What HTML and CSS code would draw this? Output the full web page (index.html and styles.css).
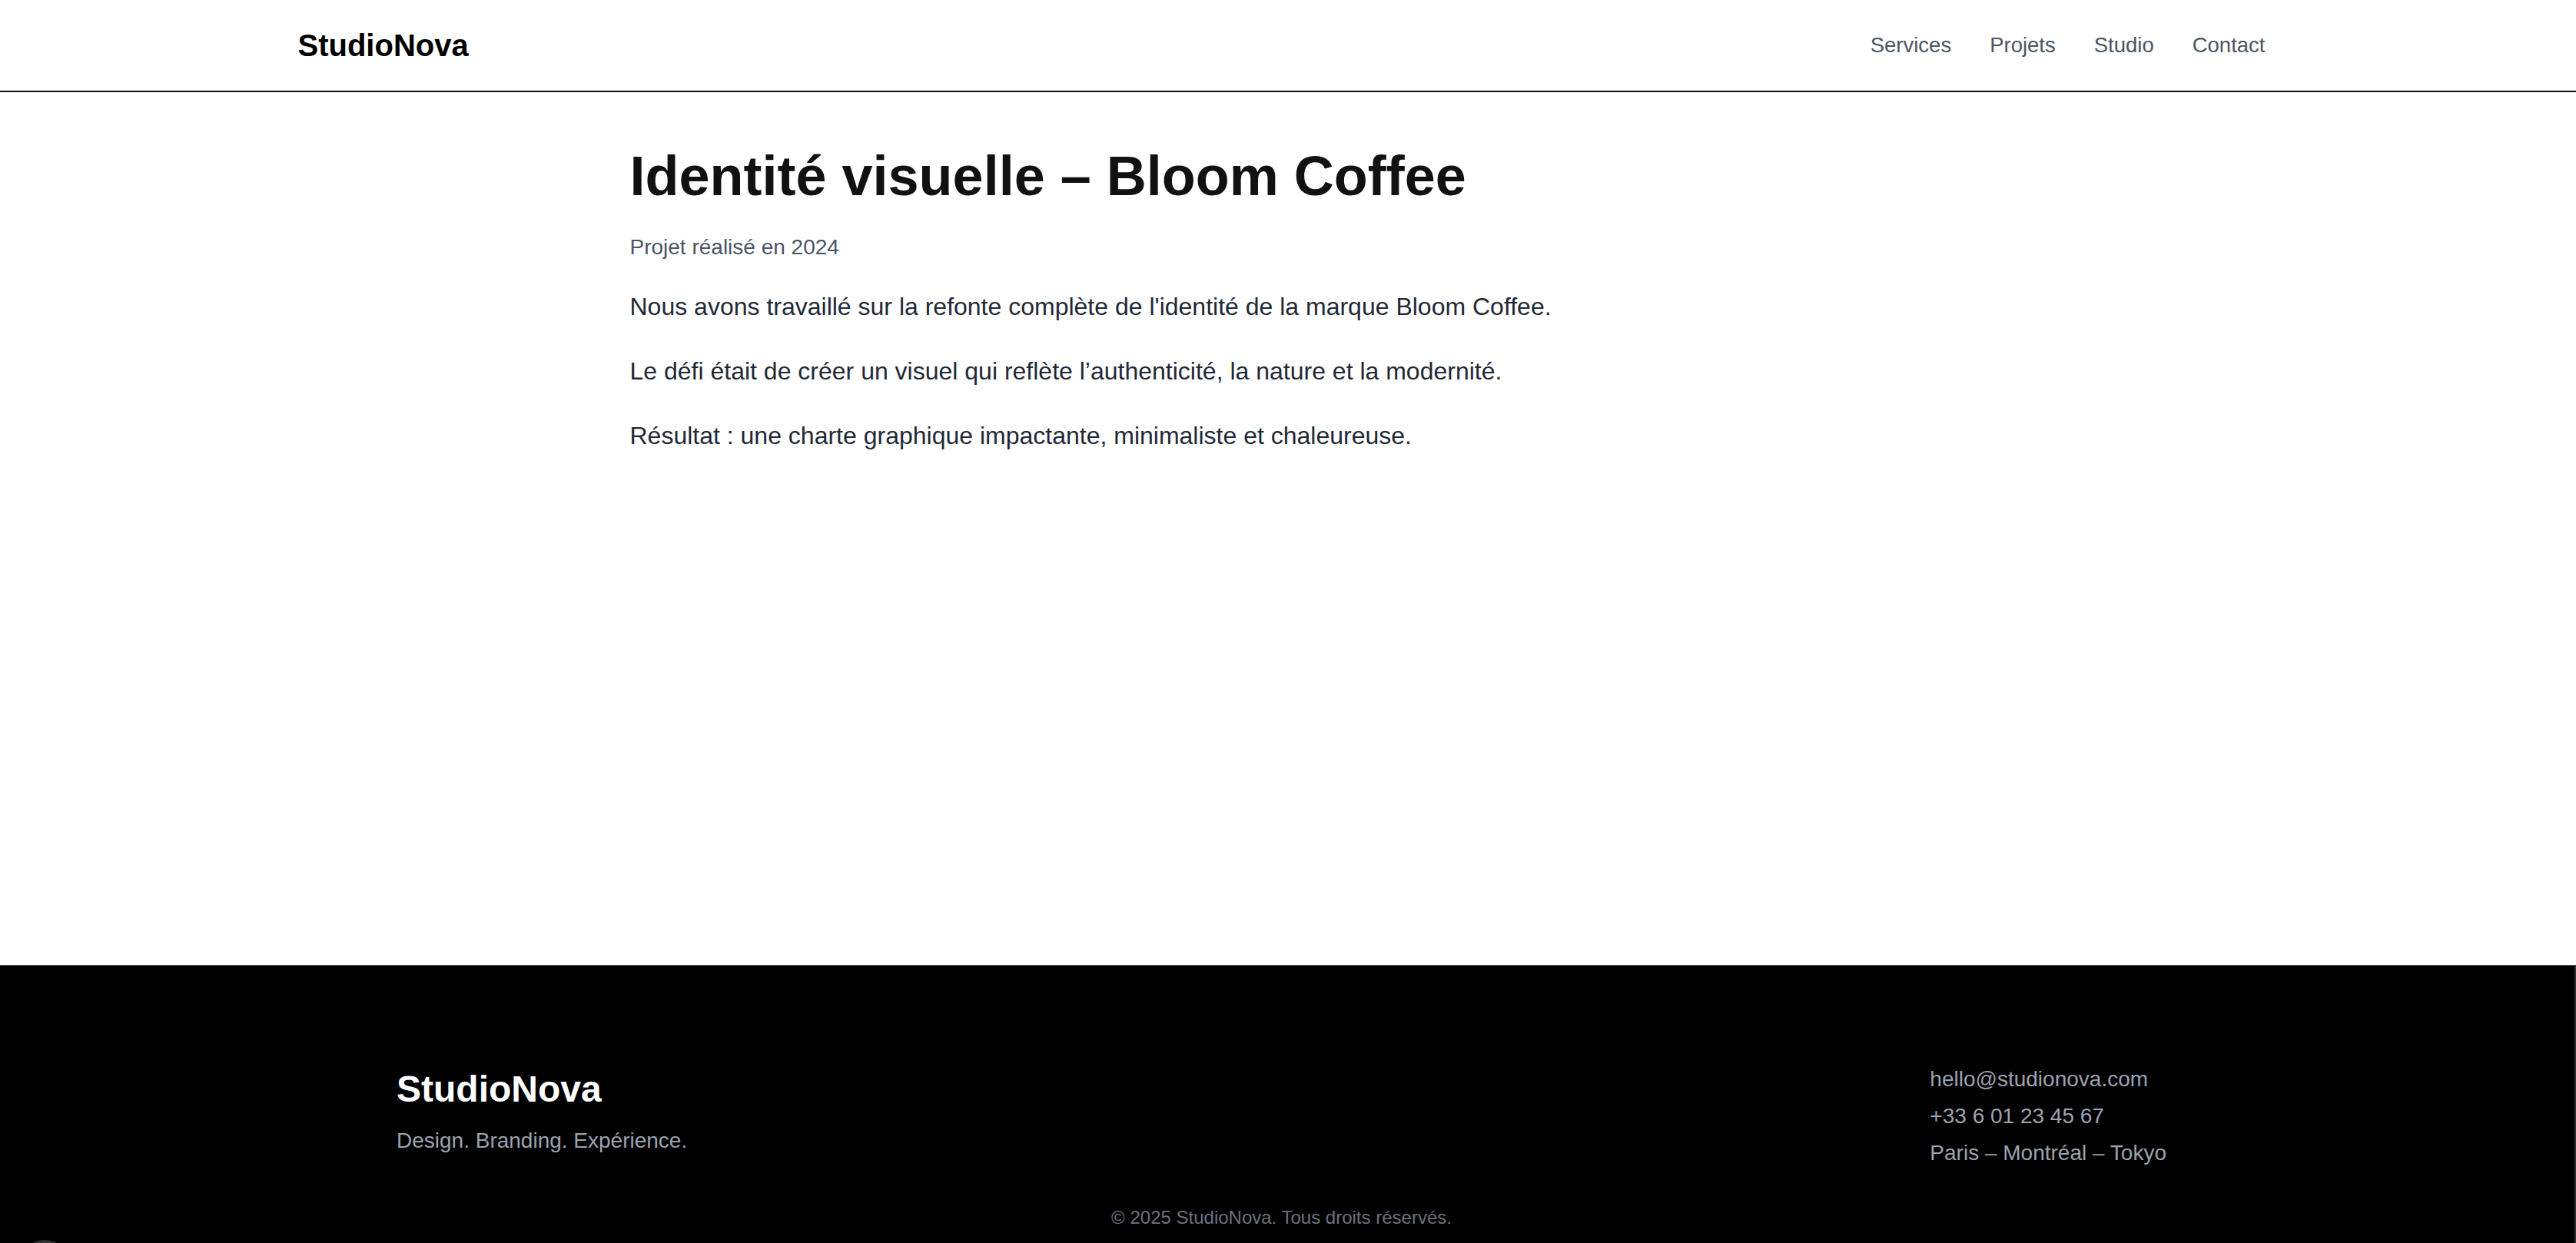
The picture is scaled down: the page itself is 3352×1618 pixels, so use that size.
FILE: index.html
```html
<!DOCTYPE html>
<html lang="fr">
<head>
<meta charset="utf-8">
<title>Identité visuelle – Bloom Coffee | StudioNova</title>
<link rel="stylesheet" href="styles.css">
</head>
<body>
<header class="site-header">
  <div class="header-inner">
    <a class="logo" href="#">StudioNova</a>
    <nav class="nav">
      <a href="#">Services</a>
      <a href="#">Projets</a>
      <a href="#">Studio</a>
      <a href="#">Contact</a>
    </nav>
  </div>
</header>

<main class="main">
  <article class="project">
    <h1 class="project-title">Identité visuelle – Bloom Coffee</h1>
    <p class="project-meta">Projet réalisé en 2024</p>
    <p class="project-text">Nous avons travaillé sur la refonte complète de l'identité de la marque Bloom Coffee.</p>
    <p class="project-text">Le défi était de créer un visuel qui reflète l’authenticité, la nature et la modernité.</p>
    <p class="project-text">Résultat : une charte graphique impactante, minimaliste et chaleureuse.</p>
  </article>
</main>

<footer class="site-footer">
  <div class="footer-inner">
    <div class="footer-brand">
      <div class="footer-logo">StudioNova</div>
      <p class="footer-tagline">Design. Branding. Expérience.</p>
    </div>
    <div class="footer-contact">
      <p>hello@studionova.com</p>
      <p>+33 6 01 23 45 67</p>
      <p>Paris – Montréal – Tokyo</p>
    </div>
  </div>
  <p class="copyright">© 2025 StudioNova. Tous droits réservés.</p>
  <div class="float-btn"></div>
</footer>
</body>
</html>
```

FILE: styles.css
```css
* { box-sizing: border-box; }

html, body {
  margin: 0;
  padding: 0;
}

body {
  font-family: "Liberation Sans", Arial, sans-serif;
  background: #ffffff;
  color: #111111;
}

a { text-decoration: none; color: inherit; }
p { margin: 0; }

/* Header */
.site-header {
  height: 120px;
  border-bottom: 2px solid #111111;
  padding-right: 15px;
}

.header-inner {
  max-width: 2562px;
  height: 100%;
  margin: 0 auto;
  display: flex;
  align-items: center;
  justify-content: space-between;
}

.logo {
  font-size: 40px;
  font-weight: 700;
  color: #000000;
  line-height: 1;
}

.nav {
  display: flex;
  gap: 50px;
  padding-right: 2px;
}

.nav a {
  font-size: 27.5px;
  color: #4b5563;
  line-height: 1;
}

/* Main */
.main {
  min-height: 1136px;
  padding: 66px 15px 0 0;
}

.project {
  max-width: 1698px;
  margin: 0 auto;
}

.project-title {
  margin: 0;
  font-size: 72px;
  line-height: 1.2;
  font-weight: 700;
  color: #111111;
}

.project-meta {
  margin-top: 29px;
  font-size: 28px;
  line-height: 42px;
  color: #4b5563;
}

.project-text {
  font-size: 32px;
  line-height: 48px;
  color: #1f2937;
  margin-top: 36px;
}

.project-meta + .project-text {
  margin-top: 32px;
}

/* Footer */
.site-footer {
  position: relative;
  background: #000000;
  border-top: 1px solid #555555;
  border-right: 2px solid #333333;
  padding: 124px 15px 60px 0;
  overflow: hidden;
}

.footer-inner {
  max-width: 2303px;
  margin: 0 auto;
  display: flex;
  justify-content: space-between;
  align-items: flex-start;
}

.footer-brand {
  padding-top: 8px;
}

.footer-logo {
  font-size: 48px;
  line-height: 1.2;
  font-weight: 700;
  color: #ffffff;
}

.footer-tagline {
  margin-top: 14px;
  font-size: 28px;
  line-height: 48px;
  color: #9ca3af;
}

.footer-contact p {
  font-size: 28px;
  line-height: 48px;
  color: #9ca3af;
}

.copyright {
  margin-top: 42px;
  text-align: center;
  font-size: 24px;
  line-height: 36px;
  color: #6b7280;
}

.float-btn {
  position: absolute;
  left: 23px;
  top: 357px;
  width: 70px;
  height: 70px;
  border-radius: 50%;
  background: radial-gradient(circle at 50% 20%, #3a3a3a, #1c1c1c 70%);
}
```
